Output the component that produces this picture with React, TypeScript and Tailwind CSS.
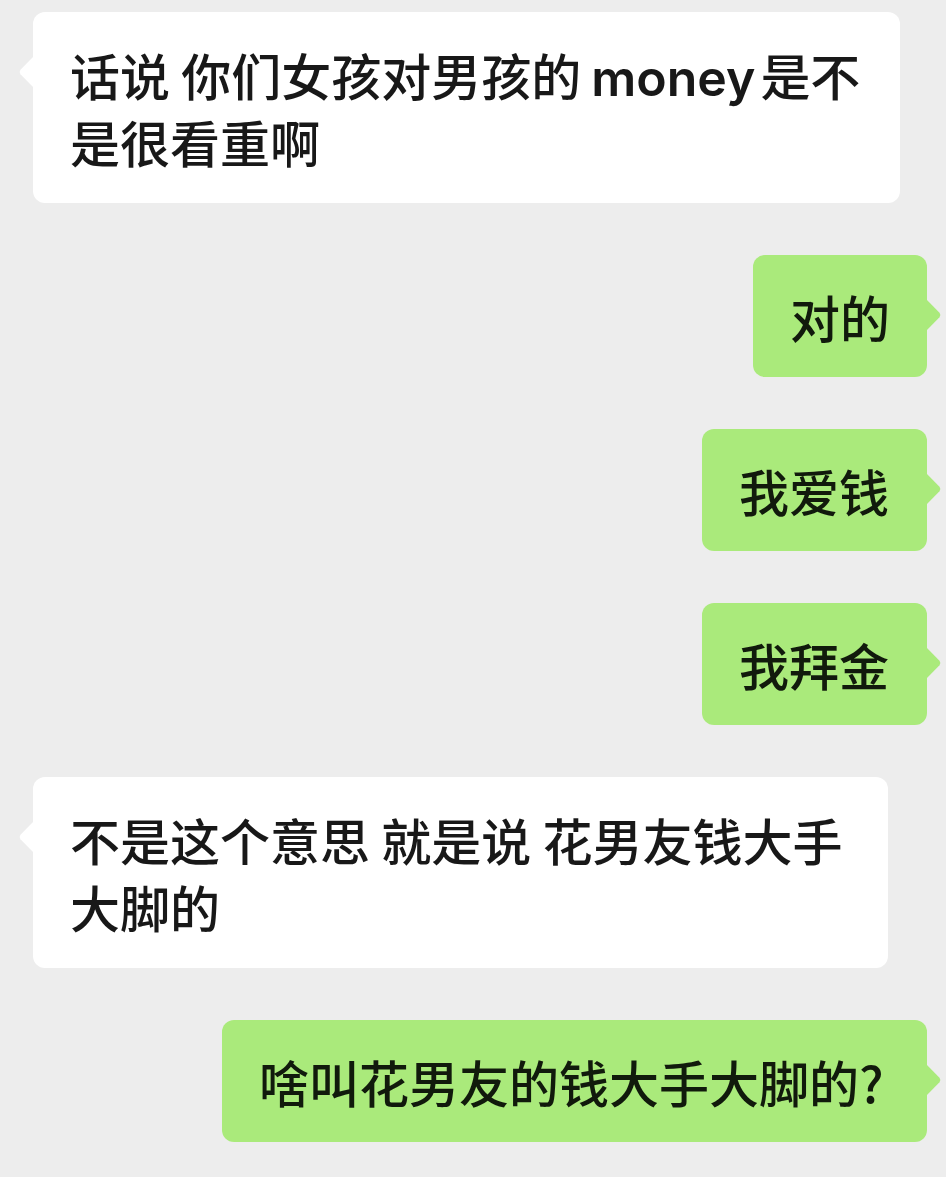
import React from "react";

const font = { fontFamily: '"Noto Sans CJK SC", "Noto Sans", sans-serif' };

function LeftTail() {
  return (
    <svg className="absolute left-[-15px] top-[44px]" width="16" height="32" viewBox="0 0 16 32">
      <path d="M16 0 L16 32 L2.5 18.2 Q0.8 16 2.5 13.8 Z" fill="#ffffff" />
    </svg>
  );
}

function RightTail() {
  return (
    <svg className="absolute right-[-15px] top-[44px]" width="16" height="32" viewBox="0 0 16 32">
      <path d="M0 0 L0 32 L13.5 18.2 Q15.2 16 13.5 13.8 Z" fill="#aaea7b" />
    </svg>
  );
}

function Left({ lines, w }: { lines: React.ReactNode[]; w: string }) {
  return (
    <div className={`relative self-start rounded-[12px] bg-white pl-[37px] pr-[20px] pt-[29px] pb-[28px] ${w}`}>
      <LeftTail />
      <div className="text-[50px] leading-[67px] font-medium text-[#181818] whitespace-pre" style={font}>
        {lines.map((l, i) => (
          <div key={i} className="h-[67px]">{l}</div>
        ))}
      </div>
    </div>
  );
}

function Right({ text, w }: { text: string; w: string }) {
  return (
    <div className={`relative self-end rounded-[12px] bg-[#aaea7b] pl-[37px] pr-[20px] pt-[28px] pb-[27px] ${w}`}>
      <RightTail />
      <div className="text-[50px] leading-[67px] font-medium text-[#111a0c] whitespace-pre" style={font}>
        {text}
      </div>
    </div>
  );
}

export default function App() {
  const line1 = (
    <>
      话说 你们女孩对男孩的
      <span className="ml-[10px] mr-[5px] font-semibold leading-none" style={{ fontFamily: 'Inter, "Noto Sans", sans-serif' }}>
        money
      </span>
      是不
    </>
  );
  return (
    <div className="min-h-[1177px] w-[946px] bg-[#ededed] pt-[12px] pl-[33px] pr-[19px] pb-[35px] flex flex-col gap-[52px]">
      <Left lines={[line1, "是很看重啊"]} w="w-[867px]" />
      <Right text="对的" w="w-[174px]" />
      <Right text="我爱钱" w="w-[225px]" />
      <Right text="我拜金" w="w-[225px]" />
      <Left lines={["不是这个意思 就是说 花男友钱大手", "大脚的"]} w="w-[855px]" />
      <Right text="啥叫花男友的钱大手大脚的?" w="w-[705px]" />
    </div>
  );
}
